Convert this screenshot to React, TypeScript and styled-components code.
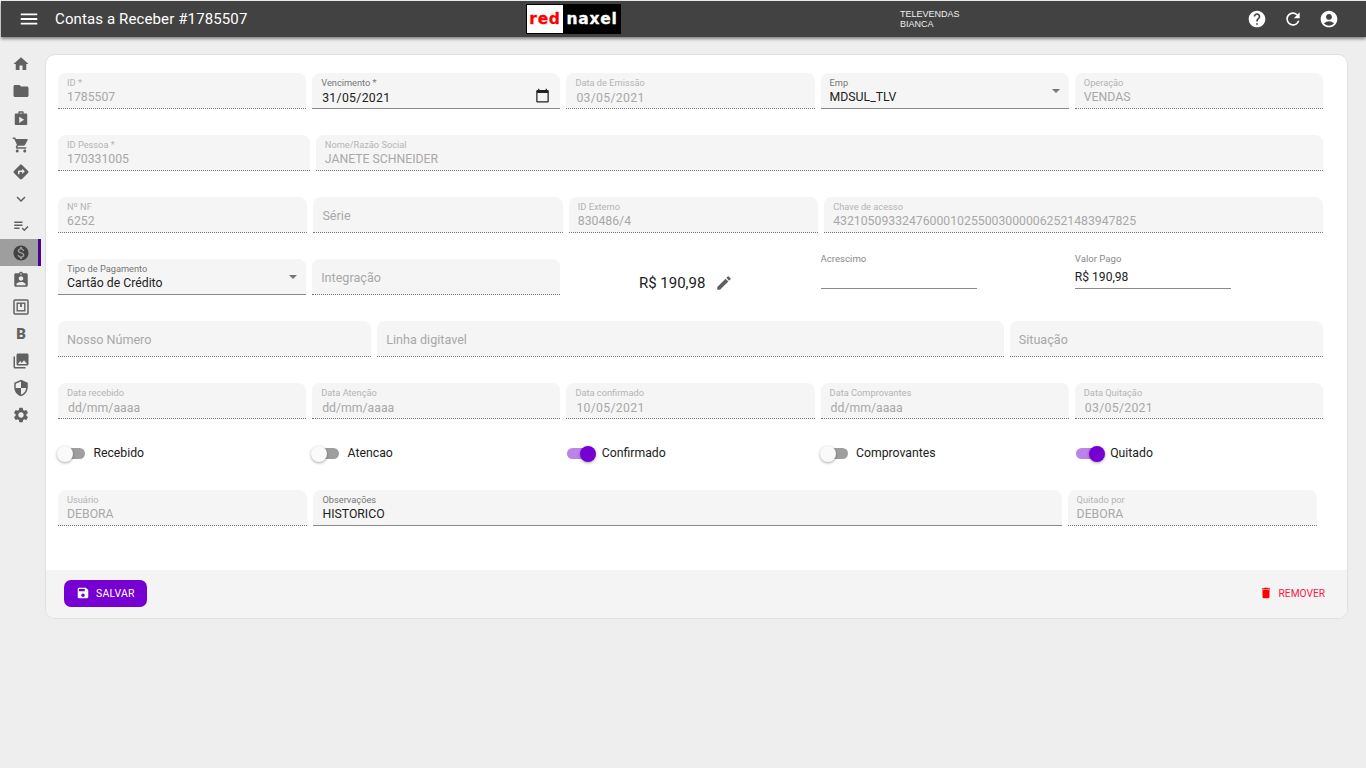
import { ReactNode } from "react";
import styled, { createGlobalStyle } from "styled-components";
import {
  MdAccountCircle,
  MdAssignmentInd,
  MdCalendarToday,
  MdDelete,
  MdDirections,
  MdEdit,
  MdExpandMore,
  MdFolder,
  MdHelp,
  MdHome,
  MdMenu,
  MdMonetizationOn,
  MdPhotoLibrary,
  MdPlaylistAddCheck,
  MdRefresh,
  MdSave,
  MdSecurity,
  MdSettings,
  MdShoppingCart,
} from "react-icons/md";

const purple = "#7600d1";

const GlobalStyle = createGlobalStyle`
  html, body {
    margin: 0;
    height: 100%;
    background: #eeeeee;
    font-family: Roboto, "Liberation Sans", sans-serif;
    overflow: hidden;
  }
  * { box-sizing: border-box; }
`;

const Page = styled.div`
  height: 768px;
  padding: 1px 0 0 1px;
`;

const TopBar = styled.header`
  height: 36px;
  background: #424242;
  color: #fff;
  display: grid;
  grid-template-columns: 525px 95px 280px 1fr;
  align-items: center;
  box-shadow: 0 2px 3px rgba(0, 0, 0, 0.45);
  position: relative;
`;

const TitleGroup = styled.div`
  display: flex;
  align-items: center;
  padding-left: 17px;
  gap: 15px;
  font-size: 15px;
  letter-spacing: 0.12px;
  svg { font-size: 22px; }
`;

const Logo = styled.div`
  height: 30px;
  background: #000;
  display: flex;
  align-items: stretch;
  font-family: "DejaVu Sans", sans-serif;
  font-weight: 700;
  font-size: 15.5px;
  letter-spacing: 0.7px;
  -webkit-text-stroke: 0.3px currentColor;
  padding: 1px 0 1px 1px;
`;

const LogoRed = styled.span`
  width: 36px;
  background: #fff;
  color: #f00;
  display: flex;
  align-items: center;
  justify-content: center;
`;

const LogoWhite = styled.span`
  flex: 1;
  color: #fff;
  display: flex;
  align-items: center;
  justify-content: center;
`;

const UserInfo = styled.div`
  font-family: "Liberation Sans", sans-serif;
  font-size: 9px;
  line-height: 10px;
  padding-left: 279px;
  color: #eee;
  white-space: nowrap;
`;

const TopActions = styled.div`
  display: flex;
  justify-content: flex-end;
  gap: 16px;
  padding-right: 27px;
  font-size: 20px;
  svg { display: block; }
`;

const Body = styled.div`
  display: flex;
  align-items: flex-start;
`;

const Sidebar = styled.nav`
  width: 44px;
  padding-top: 13px;
  display: flex;
  flex-direction: column;
  color: #616161;
`;

const NavItem = styled.div<{ $active?: boolean }>`
  width: 41px;
  height: 27px;
  margin-left: -1px;
  display: flex;
  align-items: center;
  justify-content: center;
  padding-left: 4px;
  font-size: 18px;
  font-weight: 700;
  color: ${(p) => (p.$active ? "#424242" : "inherit")};
  background: ${(p) => (p.$active ? "#9e9e9e" : "transparent")};
  border-right: 3px solid ${(p) => (p.$active ? "#4b0096" : "transparent")};
`;

const NavLetter = styled.span`
  font-size: 15px;
  font-weight: 900;
`;

const Card = styled.main`
  width: 1303px;
  height: 565px;
  margin-top: 17px;
  background: #fff;
  border: 1px solid #e0e0e0;
  border-radius: 10px;
  overflow: hidden;
  display: flex;
  flex-direction: column;
  justify-content: space-between;
`;

const Form = styled.div`
  padding: 18px 24px 0 12px;
  display: flex;
  flex-direction: column;
  gap: 26px;
`;

const Row = styled.div<{ $cols: string; $trim?: number }>`
  display: grid;
  grid-template-columns: ${(p) => p.$cols};
  gap: 6px;
  margin-right: ${(p) => p.$trim ?? 0}px;
`;

const Field = styled.div<{ $disabled?: boolean }>`
  height: 36px;
  background: #f5f5f5;
  border-radius: 8px 8px 0 0;
  padding: 4px 9px 0;
  border-bottom: 1px ${(p) => (p.$disabled ? "dotted #757575" : "solid #8a8a8a")};
  color: ${(p) => (p.$disabled ? "#a8a8a8" : "#212121")};
  position: relative;
`;

const Label = styled.div<{ $disabled?: boolean }>`
  font-size: 9.25px;
  line-height: 11px;
  color: ${(p) => (p.$disabled ? "#b4b4b4" : "#757575")};
`;

const Value = styled.div`
  font-size: 12.25px;
  line-height: 16px;
  margin-top: 1px;
  white-space: nowrap;
`;

const DateValue = styled(Value)<{ $empty?: boolean }>`
  margin: 2px 0 0 1px;
  letter-spacing: ${(p) => (p.$empty ? "0" : "0.3px")};
`;

const Placeholder = styled.div`
  font-size: 12.6px;
  line-height: 16px;
  padding-top: 7px;
  color: #a8a8a8;
`;

const FieldIcon = styled.span`
  position: absolute;
  right: 10px;
  top: 15px;
  font-size: 15px;
  color: #212121;
  line-height: 0;
`;

const Caret = styled.span`
  position: absolute;
  right: 9px;
  top: 16px;
  border: 4px solid transparent;
  border-top: 4px solid #757575;
  border-bottom: 0;
`;

const AmountCell = styled.div`
  display: flex;
  align-items: center;
  gap: 10px;
  padding: 11px 0 0 72.500px;
  font-size: 15px;
  color: #212121;
  svg { font-size: 18px; color: #616161; }
`;

const PlainField = styled.div`
  width: 156px;
  height: 36px;
  margin-top: -6px;
  border-bottom: 1px solid #8a8a8a;
`;

const PlainLabel = styled.div`
  font-size: 9.6px;
  line-height: 11px;
  color: #8a8a8a;
`;

const PlainValue = styled.div`
  font-size: 12.1px;
  line-height: 14px;
  margin-top: 6px;
  color: #212121;
`;

const ToggleRow = styled.label`
  height: 19px;
  display: flex;
  align-items: flex-start;
  gap: 8.4px;
  font-size: 12.25px;
  line-height: 16px;
  color: #212121;
`;

const Toggle = styled.span<{ $on?: boolean }>`
  width: ${(p) => (p.$on ? "26px" : "27px")};
  height: 11px;
  margin: 3px 0 0 ${(p) => (p.$on ? "1px" : "0")};
  border-radius: 6px;
  position: relative;
  flex: none;
  background: ${(p) => (p.$on ? "#ba84e8" : "#9e9e9e")};
  &::after {
    content: "";
    position: absolute;
    top: -2.5px;
    left: ${(p) => (p.$on ? "13px" : "-1px")};
    width: 16px;
    height: 16px;
    border-radius: 50%;
    background: ${(p) => (p.$on ? purple : "#fafafa")};
    box-shadow: 0 1px 3px rgba(0, 0, 0, 0.35);
  }
`;

const Footer = styled.footer`
  height: 48px;
  background: #f4f4f4;
  display: flex;
  align-items: center;
  justify-content: space-between;
  padding: 0 22px 2px 18px;
`;

const SaveButton = styled.button`
  width: 83px;
  height: 27px;
  border: 0;
  border-radius: 7px;
  background: ${purple};
  color: #fff;
  display: flex;
  align-items: center;
  gap: 6px;
  padding: 0 0 0 12px;
  font: 400 10.5px Roboto, sans-serif;
  letter-spacing: 0.2px;
  svg { font-size: 14px; }
`;

const RemoveButton = styled.button`
  border: 0;
  background: transparent;
  color: #ff1744;
  display: flex;
  align-items: center;
  gap: 6px;
  padding: 0;
  font: 400 10.2px Roboto, sans-serif;
  svg { font-size: 14px; color: #f00; }
`;

const five = "repeat(5, 1fr)";

type FieldProps = { label?: string; value?: string; disabled?: boolean; children?: ReactNode };

const TextField = ({ label, value, disabled, children }: FieldProps) => (
  <Field $disabled={disabled}>
    {label ? <Label $disabled={disabled}>{label}</Label> : null}
    {value ? <Value>{value}</Value> : null}
    {children}
  </Field>
);

const DateField = ({ label, value, disabled, children }: FieldProps) => (
  <Field $disabled={disabled}>
    <Label $disabled={disabled}>{label}</Label>
    <DateValue $empty={value === "dd/mm/aaaa"}>{value}</DateValue>
    {children}
  </Field>
);

const Empty = ({ text }: { text: string }) => (
  <Field $disabled>
    <Placeholder>{text}</Placeholder>
  </Field>
);

const Switch = ({ label, on }: { label: string; on?: boolean }) => (
  <ToggleRow>
    <Toggle $on={on} />
    <span>{label}</span>
  </ToggleRow>
);

const WalletFrame = () => (
  <svg width="18" height="18" viewBox="0 0 18 18" fill="none" stroke="currentColor">
    <rect x="2" y="2" width="14" height="14" rx="1" strokeWidth="1.5" />
    <rect x="5.2" y="5.2" width="7.6" height="7.6" strokeWidth="1.4" />
    <path d="M9 5.500v3.500" strokeWidth="1.8" />
  </svg>
);

const WorkPlay = () => (
  <svg width="16" height="16" viewBox="0 0 18 18" fill="currentColor">
    <path
      fillRule="evenodd"
      d="M6 4V2.600C6 1.900 6.600 1.500 7.200 1.500h3.600c.6 0 1.200.4 1.200 1.100V4h2.700c.8 0 1.300.6 1.300 1.300v10.400c0 .8-.6 1.300-1.300 1.300H3.300c-.8 0-1.300-.6-1.300-1.300V5.300C2 4.500 2.600 4 3.300 4H6zm1.500 0h3V3h-3v1zM7 7.500v7l5.500-3.500L7 7.500z"
    />
  </svg>
);

export default function App() {
  return (
    <Page>
      <GlobalStyle />
      <TopBar>
        <TitleGroup>
          <MdMenu />
          <span>Contas a Receber #1785507</span>
        </TitleGroup>
        <Logo>
          <LogoRed>red</LogoRed>
          <LogoWhite>naxel</LogoWhite>
        </Logo>
        <UserInfo>
          TELEVENDAS
          <br />
          BIANCA
        </UserInfo>
        <TopActions>
          <MdHelp />
          <MdRefresh />
          <MdAccountCircle />
        </TopActions>
      </TopBar>
      <Body>
        <Sidebar>
          <NavItem><MdHome /></NavItem>
          <NavItem><MdFolder /></NavItem>
          <NavItem><WorkPlay /></NavItem>
          <NavItem><MdShoppingCart /></NavItem>
          <NavItem><MdDirections /></NavItem>
          <NavItem><MdExpandMore /></NavItem>
          <NavItem><MdPlaylistAddCheck /></NavItem>
          <NavItem $active><MdMonetizationOn /></NavItem>
          <NavItem><MdAssignmentInd /></NavItem>
          <NavItem><WalletFrame /></NavItem>
          <NavItem><NavLetter>B</NavLetter></NavItem>
          <NavItem><MdPhotoLibrary /></NavItem>
          <NavItem><MdSecurity /></NavItem>
          <NavItem><MdSettings /></NavItem>
        </Sidebar>
        <Card>
          <Form>
            <Row $cols={five}>
              <TextField label="ID *" value="1785507" disabled />
              <DateField label="Vencimento *" value="31/05/2021">
                <FieldIcon><MdCalendarToday /></FieldIcon>
              </DateField>
              <DateField label="Data de Emissão" value="03/05/2021" disabled />
              <TextField label="Emp" value="MDSUL_TLV">
                <Caret />
              </TextField>
              <TextField label="Operação" value="VENDAS" disabled />
            </Row>
            <Row $cols="1fr 4fr">
              <TextField label="ID Pessoa *" value="170331005" disabled />
              <TextField label="Nome/Razão Social" value="JANETE SCHNEIDER" disabled />
            </Row>
            <Row $cols="1fr 1fr 1fr 2fr">
              <TextField label="Nº NF" value="6252" disabled />
              <Empty text="Série" />
              <TextField label="ID Externo" value="830486/4" disabled />
              <TextField label="Chave de acesso" value="43210509332476000102550030000062521483947825" disabled />
            </Row>
            <Row $cols={five}>
              <TextField label="Tipo de Pagamento" value="Cartão de Crédito">
                <Caret />
              </TextField>
              <Empty text="Integração" />
              <AmountCell>
                <span>R$ 190,98</span>
                <MdEdit />
              </AmountCell>
              <PlainField>
                <PlainLabel>Acrescimo</PlainLabel>
              </PlainField>
              <PlainField>
                <PlainLabel>Valor Pago</PlainLabel>
                <PlainValue>R$ 190,98</PlainValue>
              </PlainField>
            </Row>
            <Row $cols="1fr 2fr 1fr">
              <Empty text="Nosso Número" />
              <Empty text="Linha digitavel" />
              <Empty text="Situação" />
            </Row>
            <Row $cols={five}>
              <DateField label="Data recebido" value="dd/mm/aaaa" disabled />
              <DateField label="Data Atenção" value="dd/mm/aaaa" disabled />
              <DateField label="Data confirmado" value="10/05/2021" disabled />
              <DateField label="Data Comprovantes" value="dd/mm/aaaa" disabled />
              <DateField label="Data Quitação" value="03/05/2021" disabled />
            </Row>
            <Row $cols={five}>
              <Switch label="Recebido" />
              <Switch label="Atencao" />
              <Switch label="Confirmado" on />
              <Switch label="Comprovantes" />
              <Switch label="Quitado" on />
            </Row>
            <Row $cols="1fr 3fr 1fr" $trim={6}>
              <TextField label="Usuário" value="DEBORA" disabled />
              <TextField label="Observações" value="HISTORICO" />
              <TextField label="Quitado por" value="DEBORA" disabled />
            </Row>
          </Form>
          <Footer>
            <SaveButton>
              <MdSave />
              SALVAR
            </SaveButton>
            <RemoveButton>
              <MdDelete />
              REMOVER
            </RemoveButton>
          </Footer>
        </Card>
      </Body>
    </Page>
  );
}
